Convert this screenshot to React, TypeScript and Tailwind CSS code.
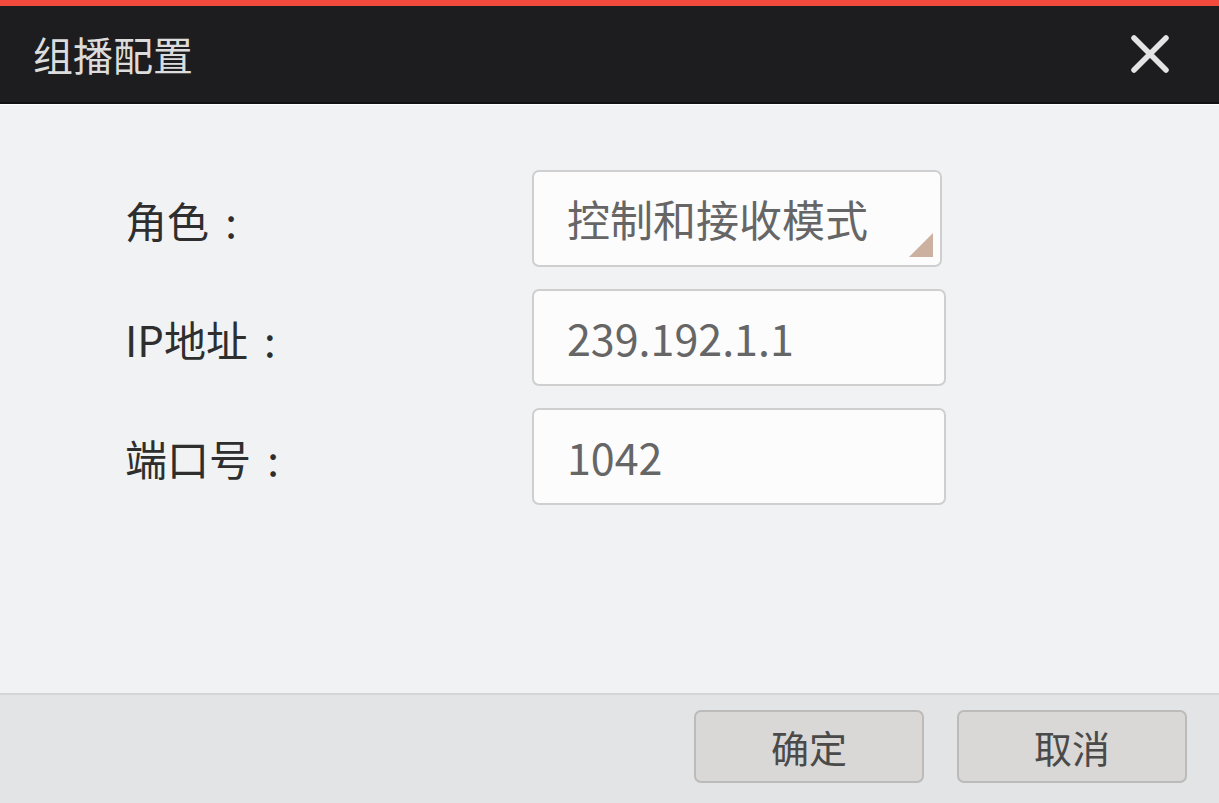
import React from 'react';

const font = { fontFamily: '"Noto Sans CJK SC", "Noto Sans", sans-serif' };

const Field: React.FC<{ label: string; value: string; select?: boolean; wide?: boolean }> = ({ label, value, select, wide }) => (
  <div className="flex items-center">
    <div className="w-[407px] flex items-center text-[42px] leading-none text-[#2e2e2e] pt-[2px]">
      <span>{label}</span>
      <span className="w-[44px] text-center">:</span>
    </div>
    <div
      className={`relative h-[97px] ${wide ? 'w-[414px]' : 'w-[410px]'} rounded-[7px] border-2 border-[#cfcfcf] bg-[#fcfcfc] flex items-center pl-[33px]`}
    >
      <span className="text-[43px] leading-none text-[#666666]">{value}</span>
      {select && (
        <svg className="absolute right-[7px] bottom-[8px]" width="24" height="24" viewBox="0 0 24 24">
          <polygon points="24,0 24,24 0,24" fill="#cdb1a0" />
        </svg>
      )}
    </div>
  </div>
);

export default function App() {
  return (
    <div className="w-[1219px] h-[803px] flex flex-col bg-[#f1f2f4] overflow-hidden" style={font}>
      {/* title bar */}
      <div className="h-[6px] bg-[#f24a3c]" />
      <div className="h-[98px] bg-[#1d1d1f] flex items-center justify-between pl-[33px] pr-[50px] border-b-2 border-[#111113]">
        <span className="text-[40px] leading-none text-[#dcdcdc]">组播配置</span>
        <svg width="38" height="38" viewBox="0 0 38 38">
          <path d="M3 3 L35 35 M35 3 L3 35" stroke="#e4e4e4" strokeWidth="5.5" strokeLinecap="round" />
        </svg>
      </div>
      <div className="h-px bg-[#ffffff]" />

      {/* body */}
      <div className="flex-1 pt-[65px] pl-[125px] flex flex-col gap-[22px]">
        <Field label="角色" value="控制和接收模式" select />
        <Field label="IP地址" value="239.192.1.1" wide />
        <Field label="端口号" value="1042" wide />
      </div>

      {/* footer */}
      <div className="h-[110px] bg-[#e3e4e6] border-t-2 border-[#d3d7d7] flex justify-end items-start pt-[15px] pr-[32px] gap-[33px]">
        <button className="w-[230px] h-[73px] rounded-[7px] border-2 border-[#bcbbb9] bg-[#d9d8d6] text-[38px] leading-none text-[#4a4a4a]">
          确定
        </button>
        <button className="w-[230px] h-[73px] rounded-[7px] border-2 border-[#bcbbb9] bg-[#d9d8d6] text-[38px] leading-none text-[#4a4a4a]">
          取消
        </button>
      </div>
    </div>
  );
}
